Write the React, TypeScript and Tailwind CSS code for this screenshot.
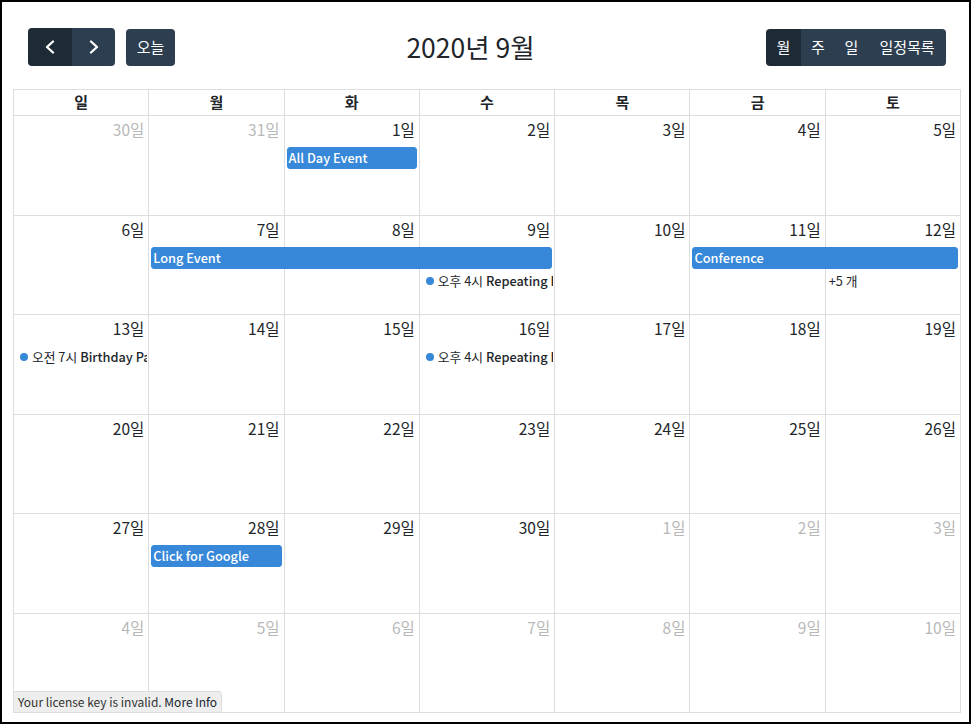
import React from 'react';

const FONT = '"Noto Sans CJK KR", "Noto Sans", "Liberation Sans", sans-serif';

const colStart = ['col-start-1', 'col-start-2', 'col-start-3', 'col-start-4', 'col-start-5', 'col-start-6', 'col-start-7'];
const rowStart = ['row-start-1', 'row-start-2', 'row-start-3'];

type Day = { n: number; other?: boolean };
type BlockEv = { kind: 'block'; col: number; span: number; row: number; title: string };
type DotEv = { kind: 'dot'; col: number; row: number; time: string; title: string };
type MoreEv = { kind: 'more'; col: number; row: number; label: string };
type Ev = BlockEv | DotEv | MoreEv;

const weeks: { days: Day[]; events: Ev[] }[] = [
  {
    days: [{ n: 30, other: true }, { n: 31, other: true }, { n: 1 }, { n: 2 }, { n: 3 }, { n: 4 }, { n: 5 }],
    events: [{ kind: 'block', col: 2, span: 1, row: 1, title: 'All Day Event' }],
  },
  {
    days: [{ n: 6 }, { n: 7 }, { n: 8 }, { n: 9 }, { n: 10 }, { n: 11 }, { n: 12 }],
    events: [
      { kind: 'block', col: 1, span: 3, row: 1, title: 'Long Event' },
      { kind: 'block', col: 5, span: 2, row: 1, title: 'Conference' },
      { kind: 'dot', col: 3, row: 2, time: '오후 4시', title: 'Repeating Event' },
      { kind: 'more', col: 6, row: 2, label: '+5 개' },
    ],
  },
  {
    days: [{ n: 13 }, { n: 14 }, { n: 15 }, { n: 16 }, { n: 17 }, { n: 18 }, { n: 19 }],
    events: [
      { kind: 'dot', col: 0, row: 1, time: '오전 7시', title: 'Birthday Party' },
      { kind: 'dot', col: 3, row: 1, time: '오후 4시', title: 'Repeating Event' },
    ],
  },
  {
    days: [{ n: 20 }, { n: 21 }, { n: 22 }, { n: 23 }, { n: 24 }, { n: 25 }, { n: 26 }],
    events: [],
  },
  {
    days: [{ n: 27 }, { n: 28 }, { n: 29 }, { n: 30 }, { n: 1, other: true }, { n: 2, other: true }, { n: 3, other: true }],
    events: [{ kind: 'block', col: 1, span: 1, row: 1, title: 'Click for Google' }],
  },
  {
    days: [
      { n: 4, other: true }, { n: 5, other: true }, { n: 6, other: true }, { n: 7, other: true },
      { n: 8, other: true }, { n: 9, other: true }, { n: 10, other: true },
    ],
    events: [],
  },
];

const headers = ['일', '월', '화', '수', '목', '금', '토'];

function Chevron({ dir }: { dir: 'left' | 'right' }) {
  return (
    <svg width="12" height="14" viewBox="0 0 12 14" fill="none">
      <polyline
        points={dir === 'left' ? '9,1.5 3,7 9,12.5' : '3,1.5 9,7 3,12.5'}
        stroke="white"
        strokeWidth="2.3"
        strokeLinecap="round"
        strokeLinejoin="round"
      />
    </svg>
  );
}

function EventItem({ ev }: { ev: Ev }) {
  if (ev.kind === 'block') {
    return (
      <div
        className={`${colStart[ev.col]} ${rowStart[ev.row]} self-start mt-px ml-[2px] mr-[3px] h-[22px] rounded-[3px] bg-[#3788d8] border border-[#3788d8] text-white text-[12.75px] leading-[20px] font-medium px-px overflow-hidden whitespace-nowrap z-10`}
        style={{ gridColumnEnd: `span ${ev.span}` }}
      >
        {ev.title}
      </div>
    );
  }
  if (ev.kind === 'dot') {
    return (
      <div
        className={`${colStart[ev.col]} col-span-1 ${rowStart[ev.row]} self-start mt-px ml-[2px] mr-[2px] h-[22px] flex items-center overflow-hidden whitespace-nowrap text-[12.75px] text-[#212529] z-10 min-w-0`}
      >
        <span className="w-2 h-2 rounded-full bg-[#3788d8] mx-[4px] shrink-0" />
        <span className="mr-[3px]">{ev.time}</span>
        <span className="font-medium">{ev.title}</span>
      </div>
    );
  }
  return (
    <div className={`${colStart[ev.col]} col-span-1 ${rowStart[ev.row]} self-start mt-px h-[22px] flex items-center pl-[3px] text-[12.75px] text-[#212529] z-10`}>
      {ev.label}
    </div>
  );
}

export default function App() {
  return (
    <div
      className="w-[971px] h-[724px] border-2 border-black bg-white overflow-hidden pt-[26px] pl-[11px]"
      style={{ fontFamily: FONT }}
    >
      <div className="w-[948px] flex flex-col">
        {/* Toolbar */}
        <div className="mx-[15px] h-[38px] flex items-center justify-between">
          <div className="flex items-center">
            <div className="flex h-[38px] rounded-[4px] overflow-hidden">
              <button className="w-[44px] h-full bg-[#1e2b37] flex items-center justify-center">
                <Chevron dir="left" />
              </button>
              <button className="w-[43px] h-full bg-[#2c3e50] flex items-center justify-center">
                <Chevron dir="right" />
              </button>
            </div>
            <button className="ml-[11px] w-[49px] h-[37px] rounded-[4px] bg-[#2c3e50] text-white text-[15px] flex items-center justify-center">
              오늘
            </button>
          </div>
          <div className="text-[26.5px] text-[#212529] leading-none">2020년 9월</div>
          <div className="flex h-[37px] rounded-[4px] overflow-hidden text-white text-[15px]">
            <button className="w-[35px] h-full bg-[#1e2b37] flex items-center justify-center">월</button>
            <button className="w-[34px] h-full bg-[#2c3e50] flex items-center justify-center">주</button>
            <button className="w-[33px] h-full bg-[#2c3e50] flex items-center justify-center">일</button>
            <button className="w-[78px] h-full bg-[#2c3e50] flex items-center justify-center">일정목록</button>
          </div>
        </div>

        {/* Grid */}
        <div className="relative mt-[23px] border-t border-l border-[#ddd] h-[624px] flex flex-col">
          <div className="grid grid-cols-7 h-[26px] shrink-0">
            {headers.map((h) => (
              <div
                key={h}
                className="border-r border-b border-[#ddd] flex items-center justify-center text-[15px] font-bold text-[#212529]"
              >
                {h}
              </div>
            ))}
          </div>
          <div className="flex-1 grid grid-rows-6 min-h-0">
            {weeks.map((w, wi) => (
              <div key={wi} className="grid grid-cols-7 grid-rows-[30px_23px_23px_1fr] min-h-0">
                {w.days.map((d, di) => (
                  <div
                    key={di}
                    className={`${colStart[di]} row-start-1 row-span-4 border-r border-b border-[#ddd] flex justify-end items-start`}
                  >
                    <span
                      className={`pt-[1px] pr-[4px] text-[15.5px] leading-6 ${d.other ? 'text-[#b8b8b8]' : 'text-[#212529]'}`}
                    >
                      {d.n}일
                    </span>
                  </div>
                ))}
                {w.events.map((ev, ei) => (
                  <EventItem key={ei} ev={ev} />
                ))}
              </div>
            ))}
          </div>

          <div className="absolute left-[-1px] bottom-0 bg-[#eeeeee] border border-[#ddd] rounded-tr-[3px] px-[4px] py-px text-[12px] leading-[18px] text-[#333] z-20">
            Your license key is invalid. <span className="text-[#1a252f]">More Info</span>
          </div>
        </div>
      </div>
    </div>
  );
}
